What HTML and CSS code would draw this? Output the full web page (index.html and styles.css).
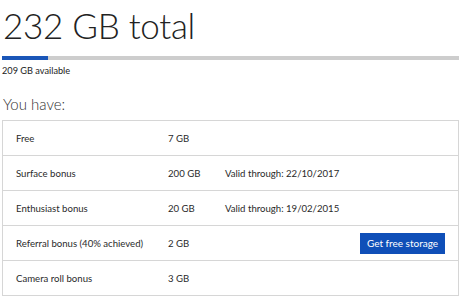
FILE: index.html
```html
<!DOCTYPE html>
<html>
<head>
    <title>Storage</title>
    <link rel="stylesheet" href="styles.css">
</head>
<body>
    <div class="storage">
        <h1 class="total">232 GB total</h1>
        <div class="meter"><div class="meter-fill" style="width: 10%"></div></div>
        <div class="available">209 GB available</div>
        <h2 class="heading">You have:</h2>
        <div class="plans">
            <div class="plan">
                <span class="plan-name">Free</span>
                <span class="plan-size">7 GB</span>
                <span class="plan-note"></span>
            </div>
            <div class="plan">
                <span class="plan-name">Surface bonus</span>
                <span class="plan-size">200 GB</span>
                <span class="plan-note">Valid through: 22/10/2017</span>
            </div>
            <div class="plan">
                <span class="plan-name">Enthusiast bonus</span>
                <span class="plan-size">20 GB</span>
                <span class="plan-note">Valid through: 19/02/2015</span>
            </div>
            <div class="plan">
                <span class="plan-name">Referral bonus (40% achieved)</span>
                <span class="plan-size">2 GB</span>
                <span class="plan-note"></span>
                <button class="get-button">Get free storage</button>
            </div>
            <div class="plan">
                <span class="plan-name">Camera roll bonus</span>
                <span class="plan-size">3 GB</span>
                <span class="plan-note"></span>
            </div>
        </div>
    </div>
</body>
</html>
```

FILE: styles.css
```css
body {
    margin: 0;
    background: #fff;
    font-family: 'Lato', 'Noto Sans', sans-serif;
    color: #333;
}
.storage {
    padding: 0 6px 0 2px;
}
.total {
    margin: 0;
    padding: 2px 0 0 1px;
    font-weight: 300;
    font-size: 35px;
    line-height: 46px;
    letter-spacing: -0.3px;
    color: #222;
}
.meter {
    margin-top: 8px;
    height: 4px;
    background: #cdcdcd;
}
.meter-fill {
    height: 100%;
    background: #1a56b8;
}
.available {
    margin-top: 5px;
    font-size: 9.2px;
    line-height: 12px;
    color: #222;
}
.heading {
    margin: 17px 0 0 1px;
    font-weight: 300;
    font-size: 15px;
    line-height: 20px;
    color: #333;
}
.plans {
    margin-top: 6px;
    border: 1px solid #d6d6d6;
}
.plan {
    display: flex;
    align-items: center;
    height: 34px;
    padding: 0 13px 0 13px;
    font-size: 9.6px;
    color: #2a2a2a;
    border-top: 1px solid #d6d6d6;
}
.plan:first-child {
    border-top: none;
}
.plan-name {
    width: 152px;
}
.plan-size {
    width: 57px;
}
.plan-note {
    flex: 1;
}
.get-button {
    height: 21px;
    width: 85px;
    padding: 0;
    border: none;
    background: #0f4fb8;
    color: #fff;
    font-family: 'Lato', sans-serif;
    font-size: 10px;
}
```
